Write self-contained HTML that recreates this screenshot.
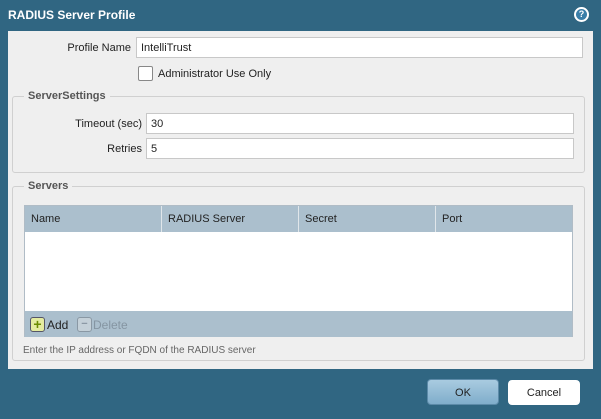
<!DOCTYPE html><html><head><style>
body{margin:0;width:601px;height:419px;background:#306682;font-family:"Liberation Sans",sans-serif;font-size:11px;color:#222;position:relative;overflow:hidden}
.a{position:absolute}
.t{left:8px;top:8px;color:#fff;font-weight:bold;font-size:12px}
.c{left:8px;top:31px;width:585px;height:338px;background:#efefef}
.in{position:absolute;background:#fff;border:1px solid #c8c8c8;box-sizing:border-box;padding:3px 4px;font-size:11px;line-height:14px}
.lb{position:absolute;text-align:right}
.fs{position:absolute;border:1px solid #d0d0d0;border-radius:3px;box-sizing:border-box}
.lg{position:absolute;background:#efefef;font-weight:bold;color:#555;font-size:11px;padding:0 4px}
.th{position:absolute;top:0;height:26px;line-height:26px;padding-left:6px;border-right:1px solid #e0e6ea;box-sizing:border-box}
.btn{position:absolute;border-radius:4px;text-align:center;line-height:26px;font-size:11px}
</style></head><body>
<div class="a t">RADIUS Server Profile</div>
<div class="a" style="left:574px;top:7px;width:15px;height:15px;border-radius:50%;background:#fff;"><div style="position:absolute;left:2px;top:2px;width:11px;height:11px;border-radius:50%;background:#3a7ea8;color:#fff;font-size:9px;font-weight:bold;text-align:center;line-height:11px">?</div></div>
<div class="a c"></div>
<div class="lb" style="left:40px;top:42px;width:91px">Profile Name</div>
<div class="in" style="left:136px;top:37px;width:447px;height:21px">IntelliTrust</div>
<div class="a" style="left:138px;top:66px;width:13px;height:13px;border:1px solid #888;border-radius:2px;background:#fff"></div>
<div class="a" style="left:158px;top:68px">Administrator Use Only</div>
<div class="fs" style="left:12px;top:96px;width:573px;height:77px"></div>
<div class="lg" style="left:24px;top:90px">ServerSettings</div>
<div class="lb" style="left:40px;top:118px;width:102px">Timeout (sec)</div>
<div class="in" style="left:146px;top:113px;width:428px;height:21px">30</div>
<div class="lb" style="left:40px;top:143px;width:102px">Retries</div>
<div class="in" style="left:146px;top:138px;width:428px;height:21px">5</div>
<div class="fs" style="left:12px;top:186px;width:573px;height:175px"></div>
<div class="lg" style="left:24px;top:180px">Servers</div>
<div class="a" style="left:24px;top:205px;width:549px;height:132px;background:#fff;border:1px solid #b0bcc6;box-sizing:border-box">
<div class="a" style="left:0;top:0;width:547px;height:26px;background:#abbfcd">
<div class="th" style="left:0;width:137px">Name</div><div class="th" style="left:137px;width:137px">RADIUS Server</div><div class="th" style="left:274px;width:137px">Secret</div><div class="th" style="left:411px;width:136px;border:0">Port</div></div>
<div class="a" style="left:0;top:105px;width:547px;height:26px;background:#abbfcd">
<div class="a" style="left:5px;top:6px;width:13px;height:13px;border:1px solid #556;border-radius:3px;background:#e4eba0;font-weight:bold;color:#6a8a00;font-size:14px;line-height:12px;text-align:center">+</div>
<div class="a" style="left:22px;top:7px;font-size:12px">Add</div>
<div class="a" style="left:52px;top:6px;width:13px;height:13px;border:1px solid #8a98a4;border-radius:3px;background:#c4d0d8;color:#8a98a4;font-weight:bold;line-height:12px;text-align:center">−</div>
<div class="a" style="left:68px;top:7px;color:#8595a2;font-size:12px">Delete</div></div></div>
<div class="a" style="left:23px;top:345px;font-size:10px;color:#666">Enter the IP address or FQDN of the RADIUS server</div>
<div class="btn" style="left:427px;top:379px;width:72px;height:26px;background:linear-gradient(#a9cbe0,#7fadcb);border:1px solid #5c8aa8;box-sizing:border-box">OK</div>
<div class="btn" style="left:508px;top:380px;width:72px;height:25px;background:#fff">Cancel</div>
</body></html>
